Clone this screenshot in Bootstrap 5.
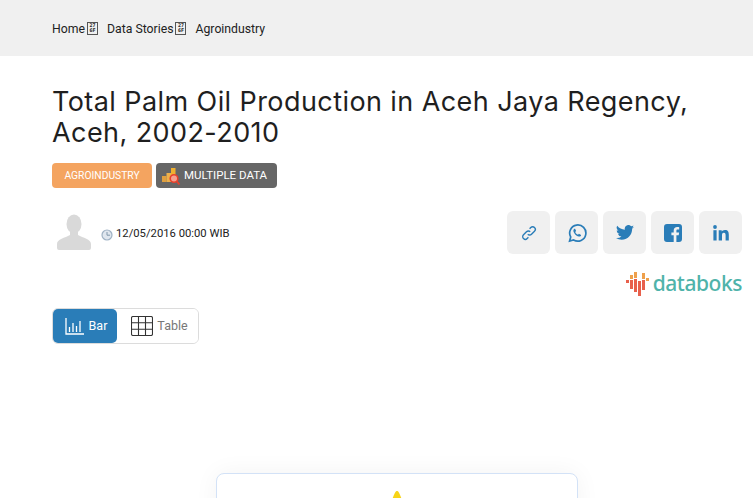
<!DOCTYPE html>
<html lang="en">
<head>
  <meta charset="UTF-8" />
  <meta name="viewport" content="width=device-width, initial-scale=1" />
  <title>Total Palm Oil Production in Aceh Jaya Regency</title>
  <link href="https://cdn.jsdelivr.net/npm/bootstrap@5.3.3/dist/css/bootstrap.min.css" rel="stylesheet">
  <style>
    html, body { height: 100%; overflow: hidden; }
    body { font-family: Roboto, "Liberation Sans", sans-serif; color: #212121; background: #fff; }
    .crumb-bar { background: #f0f0f0; height: 56px; padding: 2px 11px 0 52px; }
    .crumb-bar .breadcrumb { font-size: 12.25px; line-height: 16px; margin: 0; color: #222; }
    .crumb-bar a { color: #222; text-decoration: none; }
    .tofu { width: 11px; height: 13px; border: 1px solid #555; margin: 0 9px 0 2px; font: 700 5px/5px "DejaVu Sans Mono", monospace; color: #222; text-align: center; overflow: hidden; position: relative; top: -1px; }
    .content { padding: 30px 11px 0 52px; }
    .story-title { font-family: Inter, "Open Sans", sans-serif; font-size: 27px; line-height: 31px; font-weight: 400; letter-spacing: .42px; color: #1f1f1f; margin: 0 0 15px; }
    .tag { height: 25px; border-radius: 4px; font-size: 11px; color: #fff; font-weight: 400; padding: 0 12px; }
    .tag-orange { background: #f4a460; font-size: 10.3px; width: 100px; }
    .tag-gray { background: #666; padding: 0 10px 0 6px; font-size: 11.5px; gap: 4px; }
    .meta-row { margin-top: 23px; height: 43px; }
    .avatar { width: 40px; height: 40px; margin-right: 9px; }
    .post-date { font-size: 11.25px; color: #222; gap: 3px; position: relative; top: 2px; }
    .share-row { gap: 5px; }
    .share-btn { width: 43px; height: 43px; background: #f0f0f0; border-radius: 6px; padding: 0; border: 0; }
    .logo-row { margin-top: 15px; height: 28px; }
    .logo-word { font-family: "Noto Sans", Lato, sans-serif; font-weight: 500; font-size: 21px; line-height: 28px; color: #4fb3aa; letter-spacing: -.45px; margin-left: 2px; }
    .view-group { margin-top: 11px; width: 147px; height: 36px; border: 1px solid #dcdcdc; border-radius: 6px; }
    .view-btn { font-size: 12.5px; border: 0; padding: 0; gap: 4px; border-radius: 5px; height: 34px; color: #777; background: #fff; }
    .view-bar { width: 64px; background: #2a7db8; color: #fff; gap: 5px; padding-left: 2px; }
    .view-table { flex: 1; padding-left: 4px; }
    .chart-card { width: 362px; height: 300px; margin: 129px 0 0 164px; background: #fff; border: 1px solid #d3e2f7; border-radius: 8px; box-shadow: 0 0 24px rgba(0,0,0,.05); padding-top: 17px; }
  </style>
</head>
<body>
  <nav class="crumb-bar d-flex align-items-center" aria-label="breadcrumb">
    <div class="breadcrumb align-items-center">
      <a href="#">Home</a><span class="tofu d-inline-block">27<br>6F</span>
      <a href="#">Data Stories</a><span class="tofu d-inline-block">27<br>6F</span>
      <span>Agroindustry</span>
    </div>
  </nav>

  <main class="content">
    <h1 class="story-title">Total Palm Oil Production in Aceh Jaya Regency, Aceh, 2002-2010</h1>

    <div class="d-flex gap-1">
      <span class="tag tag-orange d-inline-flex align-items-center justify-content-center px-0">AGROINDUSTRY</span>
      <span class="tag tag-gray d-inline-flex align-items-center">
        <svg width="18" height="18" viewBox="0 0 18 18">
          <rect x="0" y="9" width="4.500" height="6" fill="#e0a040"/>
          <rect x="4.500" y="6" width="4.500" height="9" fill="#eeb04a"/>
          <rect x="9" y="1" width="4.500" height="8" fill="#f0b030"/>
          <circle cx="12" cy="11.500" r="3.800" fill="#f4a090" stroke="#e8402c" stroke-width="1.600"/>
          <path d="M14.500 14 17.500 17.500" stroke="#e8402c" stroke-width="1.800"/>
        </svg>
        MULTIPLE DATA
      </span>
    </div>

    <div class="meta-row d-flex justify-content-between align-items-center">
      <div class="d-flex align-items-center">
        <svg class="avatar" viewBox="0 1 40 40">
          <ellipse cx="22" cy="12" rx="7.500" ry="9.500" fill="#d9d9d9"/>
          <path d="M18 18h8v5c5 3 13 4 13 9v4a2 2 0 0 1-2 2H7a2 2 0 0 1-2-2v-4c0-5 8-6 13-9z" fill="#d9d9d9"/>
        </svg>
        <span class="post-date d-inline-flex align-items-center">
          <svg width="12" height="12" viewBox="0 0 12 12">
            <circle cx="6" cy="6" r="5" fill="#dfe6ee" stroke="#9fb2c4" stroke-width="1.200"/>
            <path d="M6 3v3.200h3" fill="none" stroke="#8298ac" stroke-width="1"/>
          </svg>
          12/05/2016 00:00 WIB
        </span>
      </div>
      <div class="share-row d-flex">
        <button class="share-btn btn d-flex align-items-center justify-content-center" aria-label="Link">
          <svg width="16" height="16" viewBox="0 0 16 16" fill="none" stroke="#2a7db8" stroke-width="1.400">
            <path d="M6.800 9.200a2.600 2.600 0 0 0 3.700 0l3-3a2.600 2.600 0 0 0-3.700-3.700L8.600 3.700"/>
            <path d="M9.200 6.800a2.600 2.600 0 0 0-3.700 0l-3 3a2.600 2.600 0 0 0 3.700 3.700l1.200-1.200"/>
          </svg>
        </button>
        <button class="share-btn btn d-flex align-items-center justify-content-center" aria-label="WhatsApp">
          <svg width="20" height="20" viewBox="0 0 20 20">
            <path d="M2.600 18l1.100-4A8.100 8.100 0 1 1 6.600 17z" fill="none" stroke="#2a7db8" stroke-width="1.700"/>
            <path d="M7.400 5.800c-1.300.8-1.300 2.400-.2 4.200 1.200 2 3 3.400 4.800 3.600 1.200.1 2-.7 2.100-1.700l-2.200-1.200-.9 1c-1.200-.4-2.300-1.600-2.800-2.800l.9-.9-1-2.300z" fill="#2a7db8"/>
          </svg>
        </button>
        <button class="share-btn btn d-flex align-items-center justify-content-center" aria-label="Twitter">
          <svg width="18" height="15" viewBox="0 0 24 20">
            <path fill="#2a7db8" d="M24 2.400a9.800 9.800 0 0 1-2.800.8A4.900 4.900 0 0 0 23.300.5a9.800 9.800 0 0 1-3.100 1.200A4.900 4.900 0 0 0 11.800 6.200 13.900 13.900 0 0 1 1.700.9a4.900 4.900 0 0 0 1.500 6.600 4.900 4.900 0 0 1-2.200-.6v.1a4.900 4.900 0 0 0 3.900 4.800 4.900 4.900 0 0 1-2.200.1 4.900 4.900 0 0 0 4.600 3.400A9.900 9.900 0 0 1 0 17.300 13.900 13.900 0 0 0 7.500 19.500c9 0 14-7.500 14-14v-.6A10 10 0 0 0 24 2.400z"/>
          </svg>
        </button>
        <button class="share-btn btn d-flex align-items-center justify-content-center" aria-label="Facebook">
          <svg width="18" height="18" viewBox="0 0 18 18">
            <path fill="#2a7db8" fill-rule="evenodd" d="M3 0h12a3 3 0 0 1 3 3v12a3 3 0 0 1-3 3h-2.600v-6.800h2.300l.4-2.700h-2.700V6.900c0-.8.3-1.300 1.400-1.300h1.400V3.200c-.3 0-1.100-.1-2-.1-2.100 0-3.500 1.200-3.500 3.500v1.900H7.400v2.700h2.300V18H3a3 3 0 0 1-3-3V3a3 3 0 0 1 3-3z"/>
          </svg>
        </button>
        <button class="share-btn btn d-flex align-items-center justify-content-center" aria-label="LinkedIn">
          <svg width="16" height="16" viewBox="0 0 16 16" fill="#2a7db8">
            <circle cx="2" cy="2" r="1.900"/>
            <rect x=".4" y="5.200" width="3.200" height="10.300"/>
            <path d="M5.700 5.200h3v1.400c.5-.9 1.600-1.700 3.200-1.700 3.300 0 3.900 2.100 3.900 4.900v5.700h-3.200v-5c0-1.200 0-2.700-1.700-2.700s-1.900 1.300-1.900 2.600v5.100h-3.300z"/>
          </svg>
        </button>
      </div>
    </div>

    <div class="logo-row d-flex justify-content-end align-items-center">
      <svg width="25" height="25" viewBox="0 0 25 25">
        <rect x="0" y="9" width="3" height="3" fill="#e8604c"/>
        <rect x="4" y="9" width="3" height="9" fill="#e8604c"/>
        <rect x="4" y="4" width="3" height="4" fill="#eea04c"/>
        <rect x="8" y="8" width="3" height="13" fill="#e8604c"/>
        <rect x="8" y="1" width="3" height="6" fill="#eea04c"/>
        <rect x="12" y="10" width="3" height="15" fill="#e8604c"/>
        <rect x="16" y="2" width="3" height="6" fill="#eea04c"/>
        <rect x="16" y="9" width="3" height="10" fill="#e8604c"/>
        <rect x="20" y="7" width="3" height="3" fill="#eea04c"/>
      </svg>
      <span class="logo-word">databoks</span>
    </div>

    <div class="view-group d-flex">
      <button class="view-btn view-bar btn d-flex align-items-center justify-content-center">
        <svg width="19" height="17" viewBox="0 0 19 17" fill="none" stroke="#fff" stroke-width="1.300">
          <path d="M1 0v16h18"/>
          <path d="M4.500 14V9M8 14V5M11.500 14V8M15 14V3"/>
        </svg>
        Bar
      </button>
      <button class="view-btn view-table btn d-flex align-items-center justify-content-center">
        <svg width="22" height="20" viewBox="0 0 22 20" fill="none" stroke="#333" stroke-width="1.100">
          <rect x=".5" y=".5" width="21" height="19" rx="1.500"/>
          <path d="M7.500 0v20M14.500 0v20M0 6.800h22M0 13.200h22"/>
        </svg>
        Table
      </button>
    </div>

    <div class="chart-card d-flex justify-content-center">
      <svg width="20" height="12" viewBox="0 0 20 12" class="d-block">
        <path d="M10 0c1.500 0 3 3 6 12H4C7 3 8.500 0 10 0z" fill="#f7d417"/>
      </svg>
    </div>
  </main>

  <script src="https://cdn.jsdelivr.net/npm/bootstrap@5.3.3/dist/js/bootstrap.bundle.min.js"></script>
</body>
</html>
